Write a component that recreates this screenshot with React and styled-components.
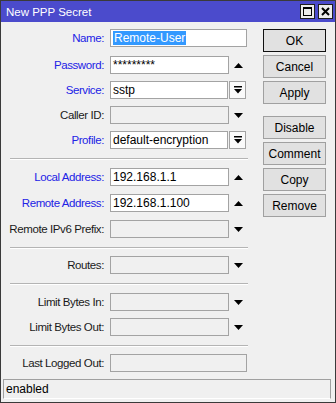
import React from "react"
import styled, { createGlobalStyle } from "styled-components"

const GlobalStyle = createGlobalStyle`
  html, body {
    margin: 0;
    padding: 0;
    background: #f0f0f0;
  }
  * {
    box-sizing: border-box;
  }
`

const fields = [
  { label: "Name", value: "Remote-User", selected: true, kind: "full", required: true, gap: 0 },
  { label: "Password", value: "*********", kind: "up", required: true, gap: 9 },
  { label: "Service", value: "sstp", kind: "select", required: true, gap: 7 },
  { label: "Caller ID", kind: "down", disabled: true, gap: 7 },
  { label: "Profile", value: "default-encryption", kind: "select", required: true, gap: 7 },
  { separator: true },
  { label: "Local Address", value: "192.168.1.1", kind: "up", required: true, gap: 8 },
  { label: "Remote Address", value: "192.168.1.100", kind: "up", required: true, gap: 8 },
  { label: "Remote IPv6 Prefix", kind: "down", disabled: true, gap: 8 },
  { separator: true },
  { label: "Routes", kind: "down", disabled: true, gap: 7 },
  { separator: true },
  { label: "Limit Bytes In", kind: "down", disabled: true, gap: 8 },
  { label: "Limit Bytes Out", kind: "down", disabled: true, gap: 7 },
  { separator: true },
  { label: "Last Logged Out", kind: "full", disabled: true, gap: 7 },
]

const buttons = [
  { text: "OK", primary: true },
  { text: "Cancel" },
  { text: "Apply" },
  { text: "Disable", spaced: true },
  { text: "Comment" },
  { text: "Copy" },
  { text: "Remove" },
]

function Triangle({ up }) {
  return (
    <svg width="9" height="5" viewBox="0 0 9 5">
      <polygon points={up ? "0,5 9,5 4.5,0" : "0,0 9,0 4.5,5"} fill="#000" />
    </svg>
  )
}

function DropIcon() {
  return (
    <svg width="8" height="8" viewBox="0 0 8 8">
      <rect x="0" y="0" width="8" height="1.5" fill="#000" />
      <polygon points="0,3 8,3 4,7.5" fill="#000" />
    </svg>
  )
}

function Field({ field }) {
  return (
    <Row gap={field.gap}>
      <Label required={field.required}>{field.label}:</Label>
      <Control kind={field.kind}>
        <Input disabled={field.disabled}>
          {field.selected ? <Highlight>{field.value}</Highlight> : field.value}
        </Input>
        {(field.kind === "up" || field.kind === "down") && (
          <Arrow>
            <Triangle up={field.kind === "up"} />
          </Arrow>
        )}
        {field.kind === "select" && (
          <DropButton>
            <DropIcon />
          </DropButton>
        )}
      </Control>
    </Row>
  )
}

function App() {
  return (
    <>
      <GlobalStyle />
      <Window>
        <TitleBar>
          <span>New PPP Secret</span>
          <TitleButtons>
            <TitleButton>
              <svg width="9" height="9" viewBox="0 0 9 9">
                <rect x="0.5" y="0.5" width="8" height="8" fill="none" stroke="#000" />
                <rect x="0" y="0" width="9" height="2" fill="#000" />
              </svg>
            </TitleButton>
            <TitleButton>
              <svg width="9" height="9" viewBox="0 0 9 9">
                <path d="M1 1 L8 8 M8 1 L1 8" stroke="#000" strokeWidth="2" />
              </svg>
            </TitleButton>
          </TitleButtons>
        </TitleBar>
        <Body>
          <Form>
            {fields.map((f, i) =>
              f.separator ? <Separator key={i} /> : <Field key={i} field={f} />
            )}
          </Form>
          <ButtonColumn>
            {buttons.map(b => (
              <Button key={b.text} primary={b.primary} spaced={b.spaced}>
                {b.text}
              </Button>
            ))}
          </ButtonColumn>
        </Body>
        <StatusBar>enabled</StatusBar>
      </Window>
    </>
  )
}

const Window = styled.div`
  width: 336px;
  height: 403px;
  border: 1px solid #3a3a3a;
  background: #f0f0f0;
  display: flex;
  flex-direction: column;
  font-family: "Liberation Sans", Arial, sans-serif;
`

const TitleBar = styled.div`
  height: 21px;
  flex-shrink: 0;
  background: #4b4bcc;
  color: #fff;
  font-size: 11.5px;
  display: flex;
  align-items: center;
  justify-content: space-between;
  padding: 0 2px 0 5px;
`

const TitleButtons = styled.div`
  display: flex;
  gap: 3px;
`

const TitleButton = styled.div`
  width: 15px;
  height: 15px;
  background: #ececec;
  border: 1px solid #1e1e1e;
  display: flex;
  align-items: center;
  justify-content: center;
`

const Body = styled.div`
  flex: 1;
  min-height: 0;
  display: flex;
  overflow: hidden;
`

const Form = styled.div`
  width: 254px;
  padding-top: 7px;
  display: flex;
  flex-direction: column;
`

const Row = styled.div`
  display: grid;
  grid-template-columns: 103px 137px;
  column-gap: 6px;
  height: 18px;
  margin-top: ${p => p.gap}px;
  flex-shrink: 0;
`

const Label = styled.div`
  text-align: right;
  font-size: 11.5px;
  letter-spacing: -0.4px;
  line-height: 18px;
  color: ${p => (p.required ? "#2222e6" : "#1a1a1a")};
  white-space: nowrap;
`

const Control = styled.div`
  display: grid;
  grid-template-columns: ${p =>
    p.kind === "full" ? "137px" : p.kind === "select" ? "118px 17px" : "119px 18px"};
  column-gap: ${p => (p.kind === "select" ? "1px" : "0")};
`

const Input = styled.div`
  height: 18px;
  border: 1px solid #a3a3a3;
  background: ${p => (p.disabled ? "#f0f0f0" : "#fff")};
  font-size: 12px;
  line-height: 16px;
  padding: 0 2px;
  color: #000;
  white-space: nowrap;
  overflow: hidden;
`

const Highlight = styled.span`
  background: #3399ff;
  color: #fff;
  padding: 0 1px;
  display: inline-block;
  line-height: 14px;
`

const Arrow = styled.div`
  display: flex;
  align-items: center;
  justify-content: center;
`

const DropButton = styled.div`
  height: 18px;
  border: 1px solid #a3a3a3;
  background: #fafafa;
  display: flex;
  align-items: center;
  justify-content: center;
`

const Separator = styled.div`
  margin: 9px 0 0 9px;
  width: 238px;
  height: 2px;
  border-top: 1px solid #b4b4b4;
  border-bottom: 1px solid #fff;
  flex-shrink: 0;
`

const ButtonColumn = styled.div`
  margin-left: 8px;
  padding-top: 7px;
  display: flex;
  flex-direction: column;
  gap: 3px;
`

const Button = styled.div`
  width: 63px;
  height: 23px;
  margin-top: ${p => (p.spaced ? "9px" : "0")};
  background: #e1e1e1;
  border: 1px solid ${p => (p.primary ? "#111" : "#a0a0a0")};
  font-size: 12px;
  display: flex;
  align-items: center;
  justify-content: center;
  color: #000;
`

const StatusBar = styled.div`
  height: 20px;
  flex-shrink: 0;
  margin: 0 4px 3px 2px;
  border-top: 1px solid #a0a0a0;
  border-left: 1px solid #a0a0a0;
  border-bottom: 1px solid #fff;
  border-right: 1px solid #a0a0a0;
  font-size: 12px;
  line-height: 18px;
  padding-left: 2px;
  color: #000;
`

export default App
